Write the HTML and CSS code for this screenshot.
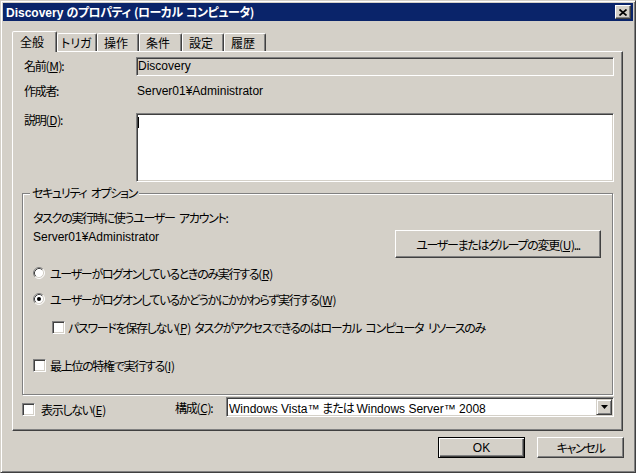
FILE: index.html
```html
<!DOCTYPE html>
<html lang="ja">
<head>
<meta charset="utf-8">
<title>Discovery のプロパティ (ローカル コンピュータ)</title>
<link rel="stylesheet" href="styles.css">
</head>
<body>
<div class="window">
  <div class="titlebar">
    <span class="title"><span class="latin">Discovery</span> のプロパティ (ローカル コンピュータ)</span>
    <span class="close"><svg width="8" height="7" viewBox="0 0 8 7"><path d="M0.5 0.5L7.5 6.5M7.5 0.5L0.5 6.5" stroke="#000" stroke-width="1.7" fill="none"/></svg></span>
  </div>
  <div class="client">
    <div class="tabs">
      <div class="tab active">全般</div>
      <div class="tab t-trigger">トリガ</div>
      <div class="tab t-action">操作</div>
      <div class="tab t-cond">条件</div>
      <div class="tab t-set">設定</div>
      <div class="tab t-hist">履歴</div>
    </div>
    <div class="panel">
      <div class="row name-row">
        <div class="label">名前(<u>M</u>):</div>
        <div class="field name-field latin">Discovery</div>
      </div>
      <div class="row author-row">
        <div class="label">作成者:</div>
        <div class="value latin">Server01¥Administrator</div>
      </div>
      <div class="row desc-row">
        <div class="label">説明(<u>D</u>):</div>
        <div class="field textarea"><span class="caret"></span></div>
      </div>
      <fieldset class="group">
        <legend class="group-title">セキュリティ オプション</legend>
        <div class="g-line">タスクの実行時に使うユーザー アカウント:</div>
        <div class="account">
          <span class="g-line acct-name latin">Server01¥Administrator</span>
          <span class="btn change">ユーザーまたはグループの変更(<u>U</u>)...</span>
        </div>
        <div class="opt r1">
          <svg class="radio" width="12" height="12" viewBox="0 0 12 12">
            <circle cx="6" cy="6" r="5" fill="#fff"/>
            <path d="M2.11 9.89A5.5 5.5 0 0 1 9.89 2.11" stroke="#808080" fill="none"/>
            <path d="M2.82 9.18A4.5 4.5 0 0 1 9.18 2.82" stroke="#404040" fill="none"/>
            <path d="M9.89 2.11A5.5 5.5 0 0 1 2.11 9.89" stroke="#fff" fill="none"/>
            <path d="M9.18 2.82A4.5 4.5 0 0 1 2.82 9.18" stroke="#d4d0c8" fill="none"/>
          </svg>
          <span>ユーザーがログオンしているときのみ実行する(<u>R</u>)</span>
        </div>
        <div class="opt r2">
          <svg class="radio" width="12" height="12" viewBox="0 0 12 12">
            <circle cx="6" cy="6" r="5" fill="#fff"/>
            <path d="M2.11 9.89A5.5 5.5 0 0 1 9.89 2.11" stroke="#808080" fill="none"/>
            <path d="M2.82 9.18A4.5 4.5 0 0 1 9.18 2.82" stroke="#404040" fill="none"/>
            <path d="M9.89 2.11A5.5 5.5 0 0 1 2.11 9.89" stroke="#fff" fill="none"/>
            <path d="M9.18 2.82A4.5 4.5 0 0 1 2.82 9.18" stroke="#d4d0c8" fill="none"/>
            <circle cx="6" cy="6" r="2" fill="#000"/>
          </svg>
          <span>ユーザーがログオンしているかどうかにかかわらず実行する(<u>W</u>)</span>
        </div>
        <div class="opt c1">
          <span class="check"></span>
          <span>パスワードを保存しない(<u>P</u>) タスクがアクセスできるのはローカル コンピュータ リソースのみ</span>
        </div>
        <div class="opt c2">
          <span class="check"></span>
          <span>最上位の特権で実行する(<u>I</u>)</span>
        </div>
      </fieldset>
      <div class="bottom-row">
        <div class="hide">
          <span class="check"></span>
          <span>表示しない(<u>E</u>)</span>
        </div>
        <div class="cfg-label">構成(<u>C</u>):</div>
        <div class="field combo">
          <span class="combo-text"><span class="latin">Windows Vista™</span> <span class="kana">または</span> <span class="latin">Windows Server™ 2008</span></span>
          <span class="dd"><svg width="7" height="4" viewBox="0 0 7 4"><path d="M0 0H7L3.5 4Z" fill="#000"/></svg></span>
        </div>
      </div>
    </div>
    <div class="buttons">
      <span class="btn default latin">OK</span>
      <span class="btn">キャンセル</span>
    </div>
  </div>
</div>
</body>
</html>
```

FILE: styles.css
```css
* {
  box-sizing: border-box;
}

html,
body {
  margin: 0;
  padding: 0;
}

body {
  width: 636px;
  height: 473px;
  overflow: hidden;
  background: #d4d0c8;
  font-family: "Noto Sans CJK JP", sans-serif;
  font-size: 12px;
  color: #000;
  font-feature-settings: "palt" 1;
  letter-spacing: -1.3px;
  word-spacing: 3px;
}

u {
  margin: 0 1px;
}

.latin {
  font-family: "Liberation Sans", "Noto Sans CJK JP", sans-serif;
  letter-spacing: 0;
  word-spacing: 0;
}

.kana {
  letter-spacing: -1px;
}

.window {
  width: 636px;
  height: 473px;
  background: #d4d0c8;
  border: 1px solid;
  border-color: #d4d0c8 #404040 #404040 #d4d0c8;
  box-shadow: inset 1px 1px #fff, inset -1px -1px #808080;
  padding: 2px;
  display: flex;
  flex-direction: column;
}

.titlebar {
  height: 18px;
  background: #0a246a;
  color: #fff;
  display: flex;
  align-items: center;
  padding: 0 2px 0 3px;
  font-weight: bold;
  letter-spacing: -0.5px;
  word-spacing: 1px;
}

.title {
  flex: 1;
  line-height: 18px;
  white-space: nowrap;
}

.close {
  width: 16px;
  height: 14px;
  background: #d4d0c8;
  border: 1px solid;
  border-color: #fff #404040 #404040 #fff;
  box-shadow: inset -1px -1px #808080;
  display: flex;
  align-items: center;
  justify-content: center;
}

.client {
  padding: 10px 10px 0 9px;
}

.tabs {
  display: flex;
  align-items: flex-end;
  height: 20px;
  letter-spacing: 0;
}

.tab {
  height: 18px;
  border: 1px solid;
  border-bottom: none;
  border-color: #fff #404040 transparent #fff;
  box-shadow: inset -1px 0 #808080;
  border-radius: 2px 2px 0 0;
  line-height: 16px;
  padding: 1px 0 0 5px;
  white-space: nowrap;
}

.tab.active {
  width: 45px;
  height: 21px;
  margin-bottom: -1px;
  position: relative;
  z-index: 1;
  background: #d4d0c8;
  padding: 2px 0 0 7px;
}

.t-trigger { width: 40px; padding-left: 3px; }
.t-action { width: 42px; padding-left: 6px; }
.t-cond { width: 43px; padding-left: 6px; }
.t-set { width: 42px; padding-left: 6px; }
.t-hist { width: 42px; padding-left: 6px; }

.panel {
  height: 380px;
  border: 1px solid;
  border-color: #fff #404040 #404040 #fff;
  box-shadow: inset -1px -1px #808080;
  padding: 5px 0 0 9px;
}

.row {
  display: flex;
}

.label {
  width: 114px;
  padding-left: 2px;
  white-space: nowrap;
}

.field {
  border: 1px solid;
  border-color: #808080 #fff #fff #808080;
  box-shadow: inset 1px 1px #404040, inset -1px -1px #d4d0c8;
}

.name-row {
  height: 19px;
}

.name-row .label {
  line-height: 15px;
  padding-top: 1px;
}

.name-field {
  width: 478px;
  height: 19px;
  padding-left: 1px;
  line-height: 17px;
}

.author-row {
  margin-top: 6px;
  height: 18px;
  line-height: 18px;
}

.value {
  padding-left: 1px;
}

.desc-row {
  margin-top: 13px;
}

.desc-row .label {
  line-height: 14px;
}

.textarea {
  width: 478px;
  height: 69px;
  background: #fff;
  padding: 3px 0 0 1px;
}

.caret {
  display: block;
  width: 1px;
  height: 11px;
  background: #000;
}

.group {
  margin: 4px 0 0 0;
  width: 591px;
  min-width: 0;
  padding: 10px 11px 21px 10px;
  border: 1px solid #808080;
  box-shadow: inset 1px 1px #fff, 1px 1px #fff;
}

.group-title {
  margin-left: -3px;
  padding: 0 2px;
  line-height: 14px;
  background: #d4d0c8;
}

.g-line {
  line-height: 16px;
  white-space: nowrap;
}

.account {
  margin-top: 2px;
  display: flex;
  justify-content: space-between;
  align-items: flex-start;
}

.acct-name {
  padding-top: 1px;
}

.btn {
  background: #d4d0c8;
  border: 1px solid;
  border-color: #fff #404040 #404040 #fff;
  box-shadow: inset -1px -1px #808080;
  display: flex;
  align-items: center;
  justify-content: center;
  white-space: nowrap;
}

.change {
  margin-top: 2px;
  width: 206px;
  height: 28px;
}

.opt {
  display: flex;
  align-items: center;
  height: 16px;
  white-space: nowrap;
}

.radio {
  flex: none;
  margin-right: 5px;
}

.check {
  flex: none;
  width: 13px;
  height: 13px;
  background: #fff;
  border: 1px solid;
  border-color: #808080 #fff #fff #808080;
  box-shadow: inset 1px 1px #404040, inset -1px -1px #d4d0c8;
  margin-right: 4px;
}

.r1 { margin-top: 7px; }
.r2 { margin-top: 10px; }
.c1 { margin-top: 12px; padding-left: 19px; }
.c1 .check { margin-right: 3px; }
.c2 { margin-top: 22px; }

.bottom-row {
  margin-top: 2px;
  display: flex;
  align-items: center;
  height: 20px;
}

.hide {
  width: 153px;
  display: flex;
  align-items: center;
  margin-top: 4px;
}

.hide .check {
  margin-right: 6px;
}

.cfg-label {
  width: 51px;
  white-space: nowrap;
}

.combo {
  width: 388px;
  height: 20px;
  background: #fff;
  display: flex;
  align-items: center;
  padding: 0 1px 0 2px;
  letter-spacing: 0;
  word-spacing: 0;
}

.combo-text {
  flex: 1;
  white-space: nowrap;
  overflow: hidden;
}

.dd {
  width: 16px;
  height: 16px;
  background: #d4d0c8;
  border: 1px solid;
  border-color: #d4d0c8 #404040 #404040 #d4d0c8;
  box-shadow: inset 1px 1px #fff, inset -1px -1px #808080;
  display: flex;
  align-items: center;
  justify-content: center;
}

.buttons {
  display: flex;
  justify-content: flex-end;
  gap: 12px;
  margin: 6px -1px 0 0;
}

.buttons .btn {
  width: 87px;
  height: 21px;
}

.buttons .default {
  border: 1px solid #000;
  box-shadow: inset 1px 1px #fff, inset -1px -1px #404040, inset -2px -2px #808080;
}
```
